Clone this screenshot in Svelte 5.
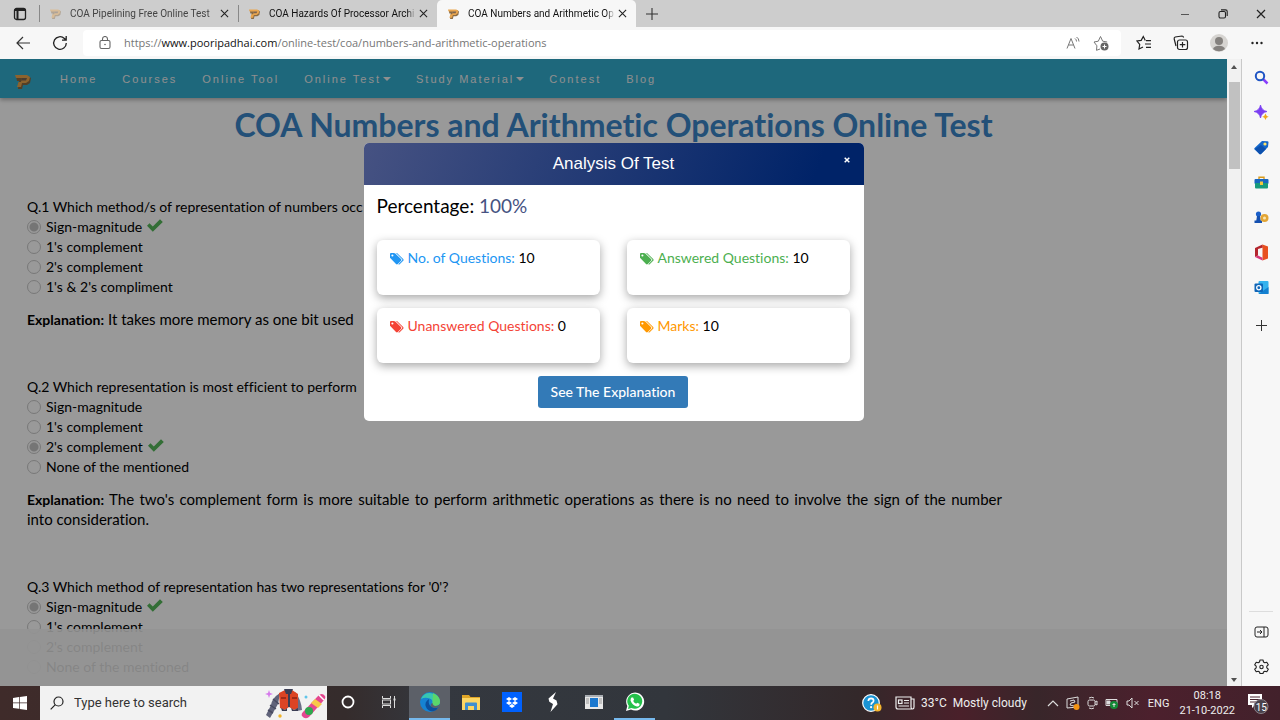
<script>
  const tabs = [
    { title: 'COA Pipelining Free Online Test', faded: true },
    { title: 'COA Hazards Of Processor Archi' },
    { title: 'COA Numbers and Arithmetic Op', active: true }
  ];
  const nav = [
    { label: 'Home' },
    { label: 'Courses' },
    { label: 'Online Tool' },
    { label: 'Online Test', menu: true },
    { label: 'Study Material', menu: true },
    { label: 'Contest' },
    { label: 'Blog' }
  ];
  const questions = [
    {
      text: 'Q.1 Which method/s of representation of numbers occ',
      options: ['Sign-magnitude', "1's complement", "2's complement", "1's & 2's compliment"],
      answer: 0,
      explanation: 'It takes more memory as one bit used'
    },
    {
      text: 'Q.2 Which representation is most efficient to perform',
      options: ['Sign-magnitude', "1's complement", "2's complement", 'None of the mentioned'],
      answer: 2,
      explanation:
        "The two's complement form is more suitable to perform arithmetic operations as there is no need to involve the sign of the number into\u00a0consideration."
    },
    {
      text: "Q.3 Which method of representation has two representations for '0'?",
      options: ['Sign-magnitude', "1's complement", "2's complement", 'None of the mentioned'],
      answer: 0
    }
  ];
  const stats = [
    { label: 'No. of Questions:', value: 10, tone: 'blue' },
    { label: 'Answered Questions:', value: 10, tone: 'green' },
    { label: 'Unanswered Questions:', value: 0, tone: 'red' },
    { label: 'Marks:', value: 10, tone: 'orange' }
  ];
</script>

{#snippet cross(size)}
  <svg width={size} height={size} viewBox="0 0 10 10" fill="none" stroke="currentColor" stroke-width="1.2"><path d="M1 1l8 8M9 1l-8 8" /></svg>
{/snippet}

{#snippet logo(size)}
  <svg width={size} height={size} viewBox="0 0 16 16">
    <path d="M1 3h12l3 2-1 5-3 2H8l-1 4H3l1-8H2z" fill="#8a6a42" />
    <path d="M0 2h12l3 2-1 4-3 2H7l-1 4H2l1.500-5H6L7 5H1z" fill="#e9a54e" />
    <path d="M7 5h5l-1 2.500H6z" fill="#7b6450" />
  </svg>
{/snippet}

<div class="screen">
  <div class="tabbar">
    <button class="ico tabmenu" aria-label="Tab actions">
      <svg width="14" height="14" viewBox="0 0 14 14" fill="none" stroke="#222" stroke-width="1.3"><rect x="1.5" y="1.5" width="11" height="11" rx="2" /><path d="M1.5 3h11M4.5 4v8" stroke-width="2" /></svg>
    </button>
    {#each tabs as tab}
      <div class="tab" class:active={tab.active} class:faded={tab.faded}>
        <span class="favicon">{@render logo(11)}</span>
        <span class="tabtitle">{tab.title}</span>
        <button class="ico" aria-label="Close tab">{@render cross(9)}</button>
      </div>
    {/each}
    <button class="ico newtab" aria-label="New tab">
      <svg width="12" height="12" viewBox="0 0 12 12" stroke="#333" stroke-width="1.1"><path d="M6 0v12M0 6h12" /></svg>
    </button>
    <div class="winctl">
      <button class="ico" aria-label="Minimize"><svg width="10" height="10" viewBox="0 0 10 10" stroke="#555"><path d="M1 5.5h8" /></svg></button>
      <button class="ico" aria-label="Restore"><svg width="10" height="10" viewBox="0 0 10 10" fill="none" stroke="#222" stroke-width="1.1"><rect x="1" y="2.5" width="6.5" height="6.5" rx="1.4" /><path d="M3 .9h4.5a1.7 1.7 0 0 1 1.7 1.7V7" /></svg></button>
      <button class="ico" aria-label="Close window">{@render cross(10)}</button>
    </div>
  </div>

  <div class="toolbar">
    <button class="ico" aria-label="Back"><svg width="16" height="16" viewBox="0 0 16 16" fill="none" stroke="#333" stroke-width="1.2"><path d="M15 8H2M8 2L2 8l6 6" /></svg></button>
    <button class="ico" aria-label="Refresh"><svg width="16" height="16" viewBox="0 0 16 16" fill="none" stroke="#222" stroke-width="1.3"><path d="M14.3 8A6.3 6.3 0 1 1 12.4 3.5L14 5M14.2 1v4.2H10" /></svg></button>
    <div class="address">
      <svg width="12" height="14" viewBox="0 0 12 14" fill="none" stroke="#666" stroke-width="1.1"><rect x="1" y="4.5" width="10" height="8" rx="1.5" /><path d="M3.5 4.5V3a2.5 2.5 0 0 1 5 0v1.5" /><circle cx="6" cy="8.5" r=".8" fill="#666" stroke="none" /></svg>
      <div class="url">https://<b>www.pooripadhai.com</b>/online-test/coa/numbers-and-arithmetic-operations</div>
      <button class="ico" aria-label="Read aloud"><svg width="14" height="14" viewBox="0 0 14 14" fill="none" stroke="#777" stroke-width="1"><path d="M1 12.500L5 2.500l4 10M2.500 9h5M9 2.500q1.500 1 1.500 3M10.500 1q2.500 1.500 2.500 4.500" /></svg></button>
      <button class="ico" aria-label="Add to favorites"><svg width="16" height="16" viewBox="0 0 16 16" fill="none" stroke="#777" stroke-width="1"><path d="M7 14l-3.500 1.300.4-4.500L1 7l4.300-.8L7.500 1.500l2.200 4.700 4.500.8" /><circle cx="11.500" cy="11.500" r="4" fill="#666" stroke="none" /><path d="M11.500 9.500v4M9.500 11.500h4" stroke="#fff" /></svg></button>
    </div>
    <button class="ico" aria-label="Favorites"><svg width="16" height="16" viewBox="0 0 16 16" fill="none" stroke="#222" stroke-width="1.200"><path d="M7 12l-4 2 .7-4.500L1 6l4.200-.6L7.300 1.500l2 3.900M10 5.700h5M9 9h6M10 12.300h5" /></svg></button>
    <button class="ico" aria-label="Collections"><svg width="16" height="16" viewBox="0 0 16 16" fill="none" stroke="#222" stroke-width="1.200"><rect x="4.500" y="5" width="10" height="9.500" rx="2" /><path d="M9.500 7v5.500M6.800 9.700h5.500M3 11L1.200 4q-.3-1.500 1-2L9 1q1.200 0 1.600 1.500" /></svg></button>
    <button class="ico" aria-label="Profile"><svg width="18" height="18" viewBox="0 0 18 18"><circle cx="9" cy="9" r="9" fill="#d6d4d1" /><circle cx="9" cy="7" r="4" fill="#84817e" /><path d="M3 15q1.500-3.200 6-3.200t6 3.200a9 9 0 0 1-12 0z" fill="#84817e" /></svg></button>
    <button class="ico" aria-label="Settings and more"><svg width="16" height="16" viewBox="0 0 16 16" fill="#222"><circle cx="3.500" cy="8" r="1.200" /><circle cx="8" cy="8" r="1.200" /><circle cx="12.500" cy="8" r="1.200" /></svg></button>
  </div>

  <div class="main">
    <div class="page">
      <header>
        <a class="brand" href="#home" aria-label="Home page">{@render logo(16)}</a>
        <nav>
          {#each nav as item}
            <a href="#{item.label}">{item.label}{#if item.menu}<i class="caret"></i>{/if}</a>
          {/each}
        </nav>
      </header>
      <h1>COA Numbers and Arithmetic Operations Online Test</h1>
      <div class="quiz">
        {#each questions as q, n}
          <section>
            <div class="question">{q.text}</div>
            {#each q.options as option, i}
              <label class="option">
                <input type="radio" name="q{n}" checked={i === q.answer} disabled />
                <span>{option}</span>
                {#if i === q.answer}
                  <svg width="16" height="16" viewBox="0 0 16 16" fill="#55b85a"><path d="M0 6.800L2.500 4.300 5.800 7.500 13 .3 15.800 3 5.800 12.700z" /></svg>
                {/if}
              </label>
            {/each}
            {#if q.explanation}<p><b>Explanation:</b> {q.explanation}</p>{/if}
          </section>
        {/each}
      </div>
      <div class="banner"></div>

      <div class="backdrop">
        <div class="modal" role="dialog" aria-labelledby="dialog-title">
          <div class="modalhead">
            <h2 id="dialog-title">Analysis Of Test</h2>
            <button class="ico close" aria-label="Close"><svg width="6" height="6" viewBox="0 0 6 6" stroke="#fff" stroke-width="1.500"><path d="M.7.7l4.600 4.600M5.300.7L.7 5.300" /></svg></button>
          </div>
          <div class="modalbody">
            <div class="percent">Percentage: <span>100%</span></div>
            <div class="cards">
              {#each stats as s}
                <div class="card {s.tone}">
                  <svg width="14" height="12" viewBox="0 0 14 12" fill="currentColor"><path fill-rule="evenodd" d="M0 1v3.800l6 6.200q.9.900 1.800 0L11 7.800q.8-.9 0-1.800L5.300.6Q4.700 0 3.800 0H1Q0 0 0 1zM2.400 1.400a1 1 0 1 1 0 2.100 1 1 0 0 1 0-2.100z" /><path d="M6 0h1l6.200 6q.8.900 0 1.800L9.700 11.300q-.7.600-1.400 0L12 7.600q.7-.8 0-1.500z" /></svg>
                  <span>{s.label} <b>{s.value}</b></span>
                </div>
              {/each}
            </div>
            <button class="explain">See The Explanation</button>
          </div>
        </div>
      </div>
    </div>

    <div class="scrollbar">
      <svg width="8" height="6" viewBox="0 0 8 6" fill="#505050"><path d="M1 5l3-4 3 4z" /></svg>
      <div class="track"><div class="thumb"></div></div>
      <svg width="8" height="6" viewBox="0 0 8 6" fill="#505050"><path d="M1 1l3 4 3-4z" /></svg>
    </div>

    <aside>
      <button class="ico" aria-label="Search"><svg width="15" height="15" viewBox="0 0 15 15" fill="none"><path d="M9 9l4.500 4.500" stroke="#8a3ffc" stroke-width="2.500" /><circle cx="6" cy="6" r="4.200" stroke="#1f55c4" stroke-width="2" /></svg></button>
      <button class="ico" aria-label="Discover"><svg width="15" height="15" viewBox="0 0 15 15"><path d="M6.500 0q1 5.500 6.500 6.500-5.500 1-6.500 6.500Q5.500 7.500 0 6.500 5.500 5.500 6.500 0z" fill="#7b3ff2" stroke="#7b3ff2" stroke-width=".8" /><path d="M11.500 8.500q.5 2.600 3.200 3.200-2.700.5-3.200 3.200-.6-2.700-3.200-3.200 2.600-.6 3.200-3.200z" fill="#f0a91b" /></svg></button>
      <button class="ico" aria-label="Shopping"><svg width="15" height="15" viewBox="0 0 15 15"><path d="M8 1l5.500.3q1 0 1 1L14 7l-7 7q-.8.600-1.600 0L.6 9.500q-.8-.8 0-1.600z" fill="#1467cb" /><path d="M1 9l6-4 5 4-5 5q-.8.600-1.600 0z" fill="#0d50ad" /><circle cx="11" cy="4" r="1.600" fill="#ffe36b" /></svg></button>
      <button class="ico" aria-label="Tools"><svg width="15" height="15" viewBox="0 0 15 15"><path d="M5 4V2.200h5V4" fill="none" stroke="#d99b1d" stroke-width="1.400" /><rect x=".5" y="4" width="14" height="5" rx="1" fill="#1766c0" /><rect x="1" y="8" width="13" height="5.500" rx="1" fill="#179a7c" /><rect x="6" y="6.500" width="3" height="3.500" fill="#f4c73d" /></svg></button>
      <button class="ico" aria-label="Games"><svg width="15" height="15" viewBox="0 0 15 15"><circle cx="4.500" cy="4" r="2.600" fill="#1a5fc9" /><path d="M3 6h3l.7 4.500H8V13H.5v-2.500h1.800z" fill="#1450b0" /><circle cx="10.500" cy="8" r="4" fill="#e2a536" /><circle cx="10.500" cy="8" r="1.500" fill="#fbe7b0" /></svg></button>
      <button class="ico" aria-label="Office"><svg width="15" height="17" viewBox="0 0 15 17"><path d="M8.500.5L1 4v9l3-1.500V5l5-1.500z" fill="#b3262e" /><path d="M8.500.5L14 2.500v12l-5.500 2V3.500z" fill="#e8501f" /><path d="M1 13l7.500 3.500v-2.800L4 11.500z" fill="#d8377a" /></svg></button>
      <button class="ico" aria-label="Outlook"><svg width="15" height="15" viewBox="0 0 15 15"><rect x="4.500" y="1" width="10" height="13" rx="1" fill="#35b2ee" /><path d="M14.500 7v7h-10z" fill="#1480d0" /><rect x=".5" y="3.500" width="8.500" height="8.500" rx="1" fill="#0f66b8" /><circle cx="4.800" cy="7.700" r="2.100" fill="none" stroke="#fff" stroke-width="1.300" /></svg></button>
      <button class="ico add" aria-label="Add"><svg width="11" height="11" viewBox="0 0 11 11" stroke="#333"><path d="M5.500 0v11M0 5.500h11" /></svg></button>
      <hr />
      <button class="ico" aria-label="Hide sidebar"><svg width="15" height="12" viewBox="0 0 15 12" fill="none" stroke="#222"><rect x="1" y="1" width="13" height="10" rx="2" /><path d="M10 1v10M3 6h5M6 4l2 2-2 2" /></svg></button>
      <button class="ico" aria-label="Settings"><svg width="15" height="15" viewBox="0 0 15 15" fill="none" stroke="#222" stroke-width="1.100" stroke-linejoin="round"><path d="M6 1h3l.5 2 1.300.8 2-.6 1.500 2.600-1.500 1.400v1.600l1.500 1.400-1.500 2.600-2-.6-1.300.8L9 14.500H6L5.500 13l-1.300-.8-2 .6L.7 10.200l1.500-1.400V7.200L.7 5.800l1.500-2.600 2 .6L5.500 3z" /><circle cx="7.500" cy="8" r="1.700" /></svg></button>
    </aside>
  </div>

  <footer>
    <button class="ico start" aria-label="Start"><svg width="14" height="14" viewBox="0 0 14 14" fill="#fff"><path d="M0 2l6-.9v5.500H0zM6.700 1L14 0v6.600H6.700zM0 7.300h6v5.500l-6-.9zM6.700 7.300H14V14l-7.300-1z" /></svg></button>
    <label class="search">
      <svg width="14" height="14" viewBox="0 0 14 14" fill="none" stroke="#222" stroke-width="1.200"><circle cx="8.500" cy="5.500" r="4.500" /><path d="M5.300 8.700L.7 13.300" /></svg>
      <input type="text" placeholder="Type here to search" aria-label="Search" />
      <svg class="art" width="61" height="31" viewBox="0 0 61 31">
        <path d="M15 5q-8 5-9 12L1 27l4 3 8-14z" fill="#60637a" /><path d="M5 17l6 4M8 11l6 5M3 22l5 3" stroke="#474a60" stroke-width="1.500" />
        <path d="M30 4q6 7 7 18l-5 1-4-12z" fill="#6b6e86" />
        <path d="M14 5l6-3h7l6 4v14l-4 2-5-3-4 3-5-2z" fill="#dc4424" /><path d="M19 1h9l-2 5h-5zM23 5h2v14h-2zM16 20l4 2 2-2v3h-5zM26 20l3 2 4-2v3h-6z" fill="#3b3e54" /><path d="M16 10h5M27 10h5" stroke="#8c2314" stroke-width="1.500" />
        <path d="M53 8q4-4 7 0 1 2-1 4L44 29q-4 3-7-1-1-2 1-4z" fill="#e44790" /><path d="M50 11l7 5-4 4-7-5z" fill="#f7c948" /><path d="M54 7l5 5" stroke="#fff" stroke-width="1.500" /><circle cx="44" cy="23" r="4" fill="#2fa84f" />
        <path d="M4 2l1 3 3 1-3 1-1 3-1-3-3-1 3-1z" fill="#d679ec" /><circle cx="41" cy="9" r="1.500" fill="#5fc5ea" /><circle cx="15" cy="28" r="1.700" fill="#f0b429" />
      </svg>
    </label>
    <div class="tiles">
      <button class="ico tile" aria-label="Cortana"><svg width="14" height="14" viewBox="0 0 14 14"><circle cx="7" cy="7" r="5.500" fill="none" stroke="#fff" stroke-width="1.800" /></svg></button>
      <button class="ico tile" aria-label="Task view"><svg width="14" height="14" viewBox="0 0 14 14" fill="none" stroke="#ddd"><path d="M.5 1v2.500h8V1M.5 13v-2.500h8V13M12.500 1v12" /><rect x=".5" y="5" width="8" height="4" /><path d="M11.500 4.500h2" stroke-width="2" /></svg></button>
      <button class="ico tile on current" aria-label="Edge"><svg width="20" height="20" viewBox="0 0 20 20"><circle cx="10" cy="10" r="10" fill="#1683d2" /><path d="M1 7a10 10 0 0 1 19 2.500q0 4-4.500 4.500-4 0-3-3 .8-3-2.800-4.500Q5 5 1 7z" fill="#38c6b0" /><path d="M13 1q7 3 7 8.500 0 4-4.500 4.500-3-.3-3-2z" fill="#5bd66b" /><path d="M9 7q-5 3-3 8t8 4q3-1 4.500-4-4 2-7.500-.5-3-2-2-7.500z" fill="#0c4f9c" /><path d="M12.500 11q-2.500 1-1.500 3.500 3.500 2.500 7.500.5l1.500-3q-2 2-4.500 2t-3-3z" fill="#5c6068" /></svg></button>
      <button class="ico tile" aria-label="File Explorer"><svg width="20" height="17" viewBox="0 0 20 17"><path d="M1 1h7l1.500 2H19v13H1z" fill="#e0a526" /><path d="M1 4h18v12H1z" fill="#fcd664" /><path d="M4 16V9.500q0-1 1-1h10q1 0 1 1V16h-3v-4H7v4z" fill="#3f8fd0" /></svg></button>
      <button class="ico tile" aria-label="Dropbox"><svg width="20" height="20" viewBox="0 0 20 20"><path fill="#0061fe" d="M0 0h20v20H0z" /><path fill="#fff" d="M7 5l3 2-3 2-3-2zM13 5l3 2-3 2-3-2zM7 9l3 2-3 2-3-2zM13 9l3 2-3 2-3-2zM10 12l3 2-3 2-3-2z" /></svg></button>
      <button class="ico tile" aria-label="S app"><svg width="12" height="20" viewBox="0 0 12 20" fill="#fff"><path d="M9 0L1.500 6.500l.8 3.200L6 12l-2.500 8 7-7.800-1-3.700L6 6.500z" /></svg></button>
      <button class="ico tile" aria-label="Desktop app"><svg width="18" height="14" viewBox="0 0 18 14"><path fill="#e8e8e8" d="M0 0h18v14H0z" /><path fill="#a9adb2" d="M0 0h18v2H0z" /><path fill="#1b78cf" d="M5 3h8v9H5z" /><path d="M1 4h3M1 6h3M1 8h3M14 4h3M14 6h3M14 8h3" stroke="#999" /></svg></button>
      <button class="ico tile on" aria-label="WhatsApp"><svg width="20" height="20" viewBox="0 0 20 20"><path d="M1 19l1.300-5A9 9 0 1 1 6 17.600z" fill="#fff" /><path d="M3 17l.8-3.200A7.500 7.500 0 1 1 6.500 16z" fill="#25c14b" /><path d="M6.500 5.500h1.600l1 2.300-.9 1.200q1 2 3 2.800l1-1.100 2.300 1v1.500q-1 1.500-2.600 1.200-4.500-1-6.400-6 0-1.600 1-2.900z" fill="#fff" /></svg></button>
    </div>
    <div class="tray">
      <button class="ico" aria-label="Help"><svg width="20" height="18" viewBox="0 0 20 18"><circle cx="9" cy="9" r="8.300" fill="#1a93d4" stroke="#fff" stroke-width="1.200" /><path d="M6.300 7q.2-2.600 2.800-2.600 2.500.1 2.500 2.300 0 1.300-1.400 2-1 .6-1 2" fill="none" stroke="#fff" stroke-width="1.700" /><circle cx="9.100" cy="13.200" r="1.100" fill="#fff" /><circle cx="15.500" cy="13.500" r="4" fill="#f5b52e" /><path d="M15.500 11.500v4" stroke="#fff" stroke-width="1.200" /></svg></button>
      <button class="ico weather"><svg width="20" height="14" viewBox="0 0 20 14" fill="none" stroke="#eee" stroke-width="1.200"><path d="M17 13H3q-2 0-2-2V1h15v10q0 2 1.500 2T19 11V3h-3" /><path d="M9 4.500h5M9 7h5M3.500 10h10.500" /><rect x="3.500" y="4" width="3.500" height="3.500" /></svg><span>33°C&nbsp; Mostly cloudy</span></button>
      <div class="status">
        <button class="ico" aria-label="Show hidden icons"><svg width="12" height="8" viewBox="0 0 12 8" fill="none" stroke="#ddd" stroke-width="1.200"><path d="M1 7l5-5 5 5" /></svg></button>
        <svg width="14" height="14" viewBox="0 0 14 14" fill="none" stroke="#ddd"><path d="M1 3l11-2v10l-11 1zM4 5l4-1 1 2-4 1-1 2 4 1" /><circle cx="10.500" cy="11" r="3" fill="#f39212" stroke="none" /></svg>
        <svg width="11" height="14" viewBox="0 0 11 14" fill="none" stroke="#ddd"><rect x="1" y="4" width="7" height="6" rx="1.500" /><path d="M8 6l2-1v4l-2-1M2 2q3-1.500 5 0M2 12q3 1.500 5 0" /></svg>
        <svg width="14" height="14" viewBox="0 0 14 14" fill="none" stroke="#ddd"><path d="M1 3.500h11v6H1z" /><path d="M2 5h3v3H2z" fill="#ddd" /><circle cx="9" cy="9" r="4" fill="#138a36" stroke="none" /><path d="M9 7v4M7.500 8.500h3" /></svg>
        <svg width="13" height="12" viewBox="0 0 13 12" fill="none" stroke="#ddd"><path d="M1 4h2l3-3v10L3 8H1zM8.500 4l4 4M12.500 4l-4 4" /></svg>
        <span class="lang">ENG</span>
      </div>
      <div class="clock"><span>08:18</span><span>21-10-2022</span></div>
      <button class="ico notif" aria-label="Notifications"><svg width="22" height="22" viewBox="0 0 22 22"><path d="M1 2h14v11H8l-3 3v-3H1z" fill="#fff" /><path d="M3 5h10M3 7.500h10M3 10h6" stroke="#4a2630" /><circle cx="14" cy="14.500" r="7" fill="#49414a" stroke="#8a8088" /></svg><span>15</span></button>
    </div>
  </footer>
</div>

<style>
  :global(body) { margin: 0; }
  .screen { display: flex; flex-direction: column; height: 100vh; overflow: hidden; font-family: Roboto, "Open Sans", sans-serif; color: #111; }
  .screen :is(div, span, button, input, label, header, nav, aside, a) { box-sizing: border-box; }
  svg { display: block; flex: none; }
  .ico { display: flex; align-items: center; justify-content: center; padding: 0; border: 0; background: none; color: #222; font: inherit; flex: none; }

  .tabbar { display: flex; align-items: stretch; height: 27px; background: #cdcdcd; font-size: 10px; flex: none; }
  .tabmenu { width: 39px; }
  .tab { display: flex; align-items: center; gap: 3px; width: 199px; padding: 0 9px 0 10px; margin: 5px 0; border-left: 1px solid #888; }
  .tab.active { margin: 0; padding-left: 11px; border: 0; border-radius: 5px 5px 0 0; background: #f7f7f7; }
  .favicon { margin-right: 6px; }
  .faded .favicon { opacity: .4; }
  .faded { color: #444; }
  .tabtitle { flex: 1; min-width: 0; overflow: hidden; white-space: nowrap; mask-image: linear-gradient(90deg, #000 94%, transparent); }
  .newtab { width: 32px; }
  .winctl { display: flex; gap: 28px; margin-left: auto; padding-right: 14px; }

  .toolbar { display: flex; align-items: center; gap: 21px; height: 32px; padding: 0 15px; background: #f7f7f7; flex: none; }
  .address { display: flex; align-items: center; gap: 13px; flex: 1; height: 26px; margin-left: -6px; margin-right: -6px; padding: 0 12px 0 16px; border-radius: 4px; background: #fff; }
  .url { flex: 1; font-family: "Open Sans", sans-serif; font-size: 11px; line-height: 16px; color: #767676; white-space: nowrap; overflow: hidden; }
  .url b { font-weight: 400; color: #111; }

  .main { display: flex; flex: 1; min-height: 0; }
  .page { position: relative; flex: 1; min-width: 0; overflow: hidden; background: #fff; color: #000; font-family: Lato, "Open Sans", sans-serif; font-size: 14px; line-height: 20px; font-variant-ligatures: none; }
  header { display: flex; align-items: center; height: 39px; padding-left: 15px; background: #32adcf; box-shadow: 0 2px 4px rgba(0, 0, 0, .3); }
  .brand { width: 45px; padding-top: 4px; }
  nav { display: flex; gap: 25px; font: 11px/16px "Liberation Sans", Arial, sans-serif; letter-spacing: 2px; }
  nav a { display: flex; align-items: center; gap: 2px; color: #eee; text-decoration: none; }
  .caret { border: 4px solid transparent; border-top-color: #eee; border-bottom: 0; }
  h1 { margin: 5px 0 0; font-size: 32px; line-height: 44px; font-weight: 700; text-align: center; color: #3b86c8; }
  .quiz { margin: 50px 225px 0 27px; }
  section { margin-bottom: 48px; }
  .option { display: flex; align-items: center; height: 20px; gap: 5px; }
  .option input { appearance: none; width: 14px; height: 14px; margin: 0; border: 1px solid #c8c8c8; border-radius: 50%; }
  .option input:checked { background: radial-gradient(circle, #c4c4c4 4px, transparent 5px); }
  section p { margin: 12px 0 0; font-size: 15px; text-align: justify; }
  section p b { font-size: 14px; line-height: 14px; }
  .banner { position: absolute; left: 0; right: 0; bottom: 0; height: 57px; background: rgba(246, 246, 246, .9); }

  .backdrop { position: absolute; inset: 0; padding: 84px 16px 0; background: rgba(0, 0, 0, .4); }
  .modal { max-width: 500px; margin: 0 auto; border-radius: 5px; background: #fff; overflow: hidden; }
  .modalhead { display: flex; align-items: center; justify-content: center; position: relative; height: 42px; background: linear-gradient(110deg, #465282, #002368 90%); }
  h2 { margin: 0; font: 17px/24px "Liberation Sans", Arial, sans-serif; color: #fff; }
  .close { position: absolute; right: 14px; top: 14px; }
  .modalbody { padding: 9px 14px 13px 13px; }
  .percent { font-size: 19px; line-height: 24px; margin-bottom: 22px; }
  .percent span { color: #465282; }
  .cards { display: grid; grid-template-columns: 1fr 1fr; gap: 13px 27px; }
  .card { display: flex; gap: 4px; height: 55px; padding: 8px 13px; border-radius: 6px; box-shadow: 0 3px 10px rgba(0, 0, 0, .35); }
  .card svg { margin-top: 5px; }
  .card b { font-weight: 400; color: #000; }
  .blue { color: #2196f3; }
  .green { color: #4caf50; }
  .red { color: #f44336; }
  .orange { color: #ff9800; }
  .explain { display: block; height: 32px; margin: 13px auto 0; padding: 0 13px; border: 0; border-radius: 3px; background: #337ab7; color: #fff; font: 500 14px/20px Lato, "Open Sans", sans-serif; font-variant-ligatures: none; }

  .scrollbar { display: flex; flex-direction: column; align-items: center; width: 15px; padding: 5px 0 3px; border-right: 1px solid #c9c9c9; background: #f1f1f1; flex: none; }
  .track { flex: 1; width: 11px; padding-top: 12px; }
  .thumb { height: 87px; background: #c1c1c1; }

  aside { display: flex; flex-direction: column; align-items: center; width: 38px; padding: 1px 0 2px; background: #f7f7f7; flex: none; }
  aside .ico { height: 35px; }
  aside .add { height: 41px; }
  aside hr { width: 24px; margin: auto 0 2px; border: 0; border-top: 1px solid #ddd; }

  footer { display: flex; height: 34px; flex: none; color: #eee; background: linear-gradient(90deg, #3f2b2a 0, #352c2c 27%, #34383f 34%, #32363c 52%, #33282a 67%, #4a202a 75%, #38262a 81%, #4c202d 90%, #42212b); }
  .start { width: 40px; }
  .search { display: flex; align-items: center; gap: 10px; width: 287px; padding: 0 1px 0 10px; background: #f2f2f2; }
  .search input { flex: 1; min-width: 0; border: 0; padding: 0; background: none; font: 13px/18px Roboto, sans-serif; }
  .search input::placeholder { color: #333; opacity: 1; }
  .tiles { display: flex; }
  .tile { width: 41px; border-bottom: 2px solid transparent; }
  .tile.on { border-bottom-color: #76b9ed; }
  .tile.current { background: #5c6068; }
  .tray { display: flex; align-items: center; margin-left: auto; font-size: 12px; }
  .weather { gap: 6px; margin-left: 13px; color: #eee; font-size: 12px; }
  .status { display: flex; align-items: center; gap: 7px; margin-left: 20px; }
  .lang { margin-left: 2px; font-size: 11px; }
  .clock { display: flex; flex-direction: column; align-items: center; margin-left: 10px; font-size: 11px; line-height: 15px; }
  .notif { position: relative; margin: 0 11px 0 12px; color: #fff; font-size: 10px; }
  .notif span { position: absolute; right: 2px; bottom: 1px; }
</style>
